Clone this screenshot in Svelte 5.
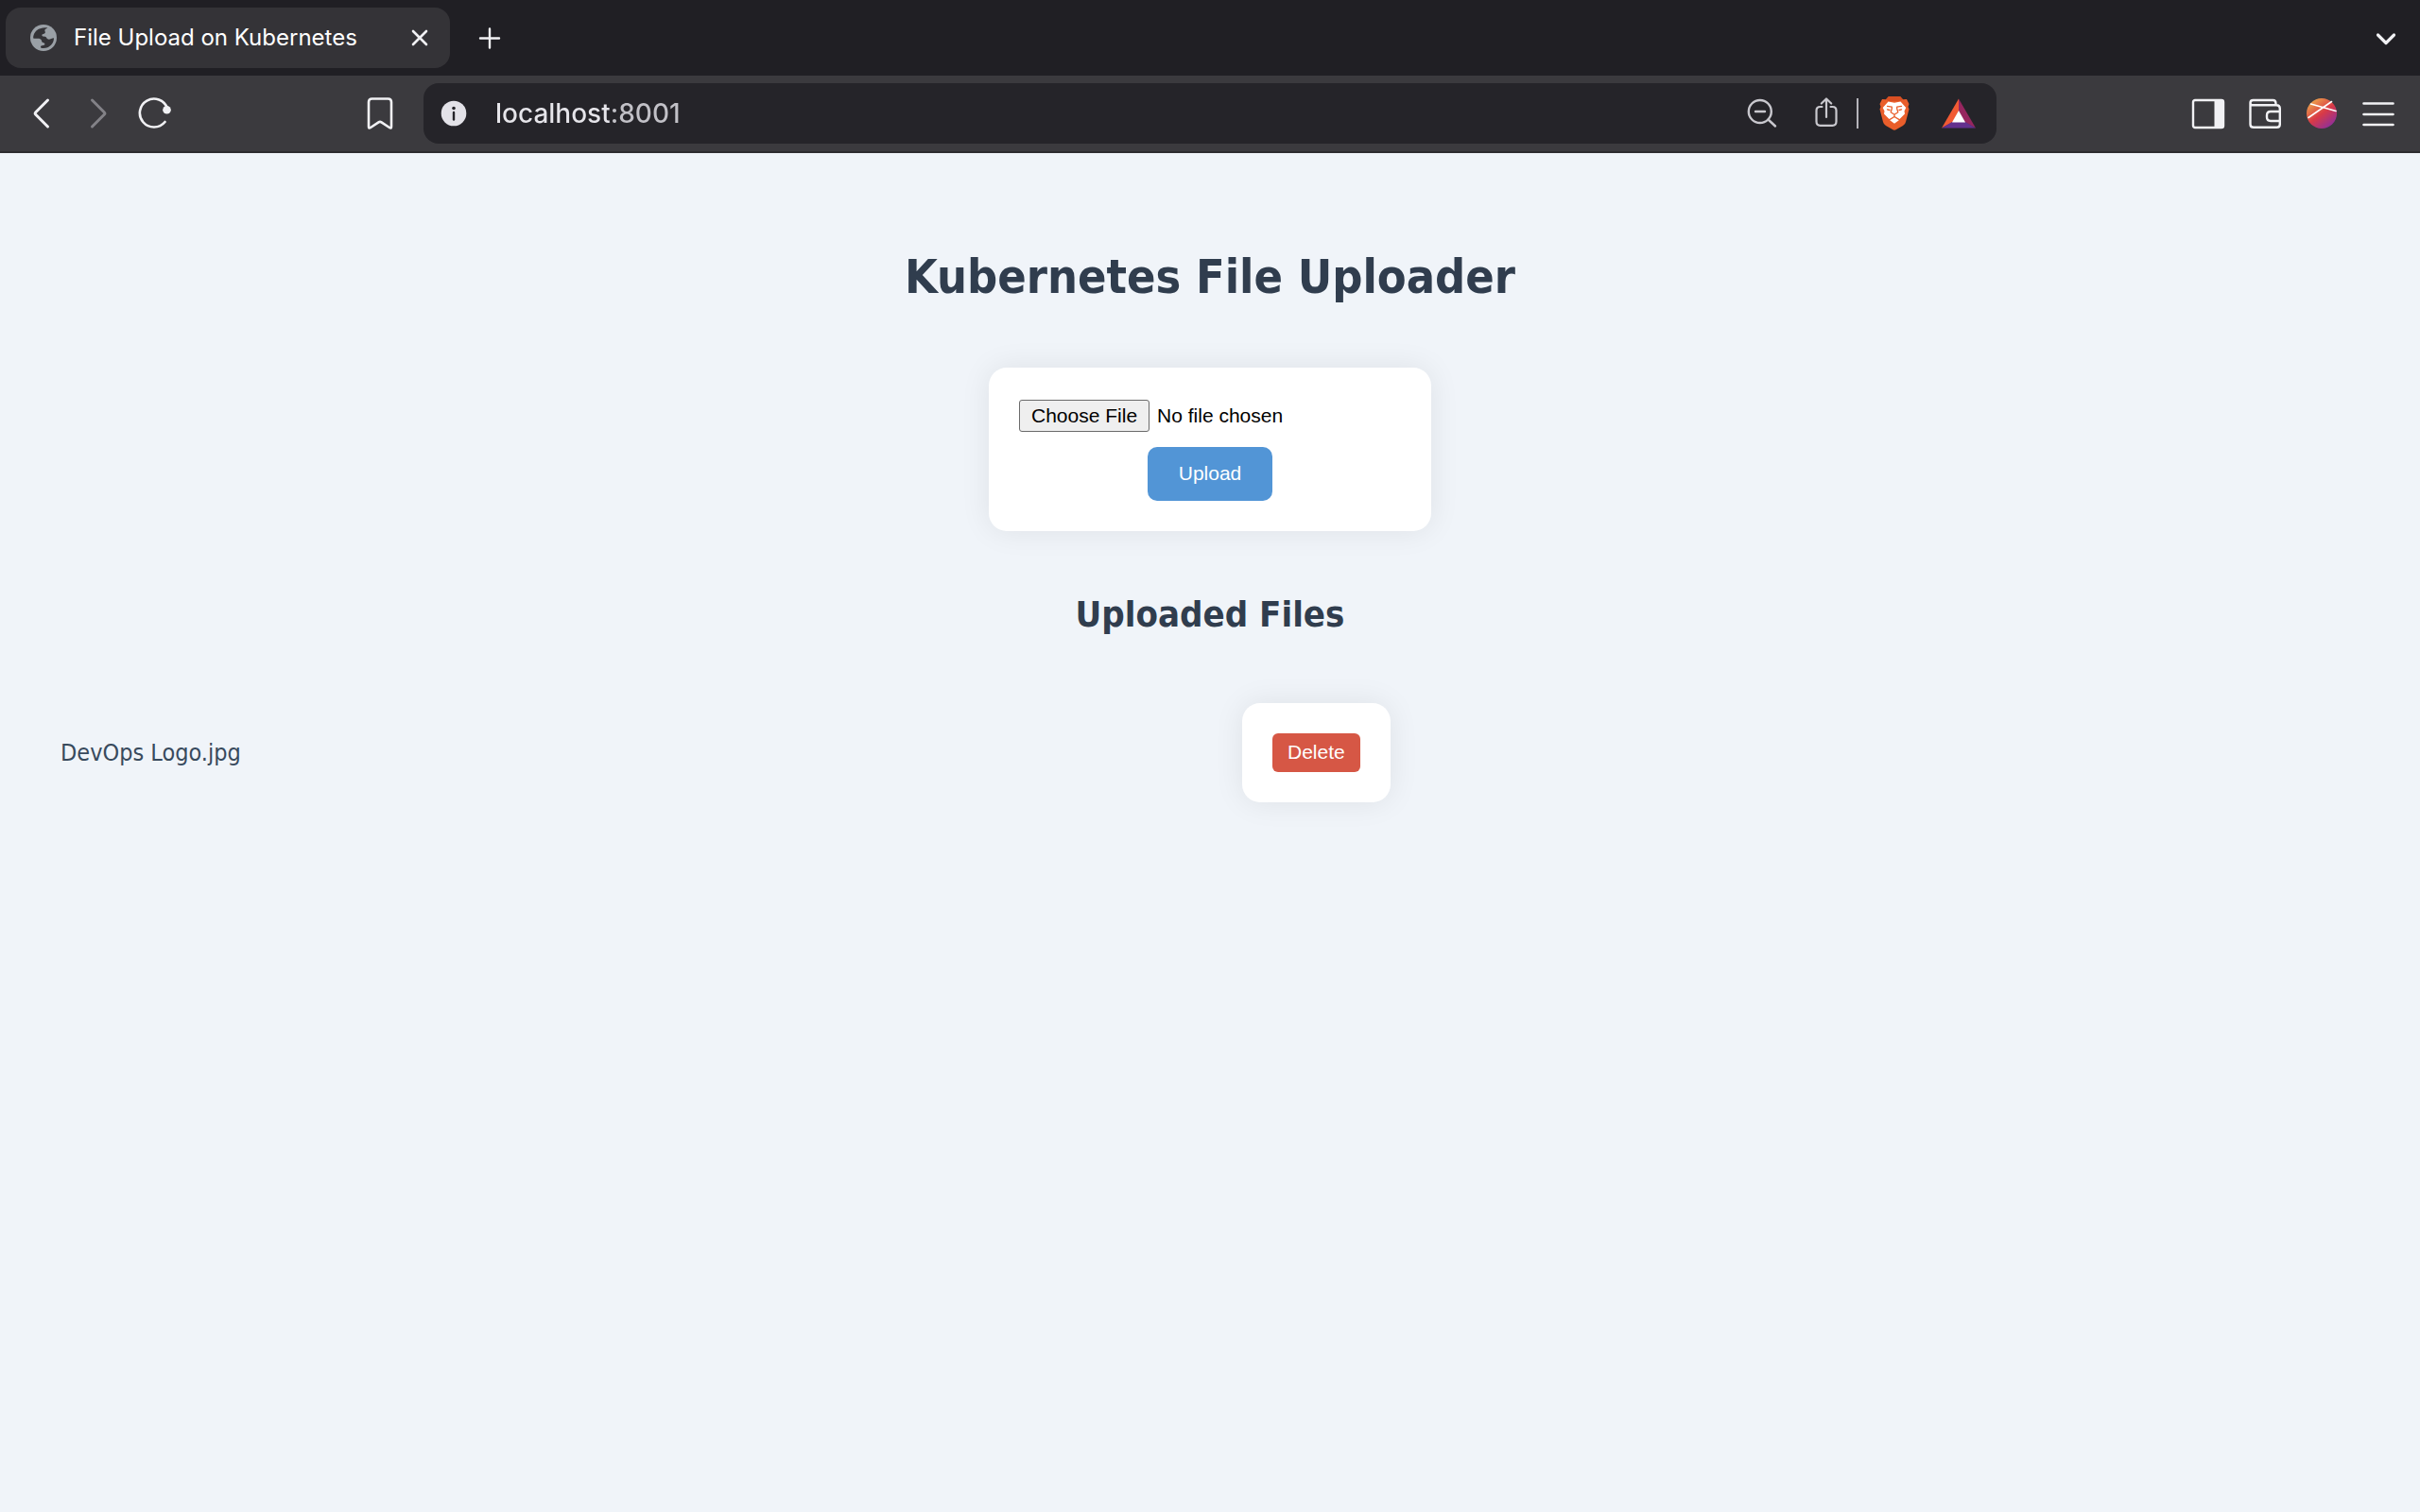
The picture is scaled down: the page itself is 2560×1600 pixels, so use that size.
<script>
  let files = $state(['DevOps Logo.jpg']);

  function removeFile(name) {
    files = files.filter((file) => file !== name);
  }
</script>

<div class="browser">
  <header>
    <div class="tabstrip">
      <div class="tab">
        <svg class="icon favicon" viewBox="0 0 28 28" aria-hidden="true">
          <circle cx="14" cy="14" r="14" fill="#9aa0a6" />
          <path
            d="M3.2 14.6C3 10 6 5.500 10.500 4.300C13 3.400 16 3 18.300 3.500C17.300 4.300 15.800 4.600 15.400 5.800C15.100 6.900 16.200 7.600 15.800 8.700C15.400 9.700 13.900 9.600 13 10.200C12 10.900 12.300 12.100 13.300 12.400L15.800 12.800C17.500 13.200 17.200 15.300 19 15.600C21 15.900 22.800 14.200 25 14.200C25 18.600 22.300 22.500 18.300 24.200C16.300 25 13.800 25.200 11.800 24.800C10.800 24.600 10.700 23 11.600 22.500C12.700 22 14.600 22.300 15.300 21.200C16 20 14.400 19.300 13.200 18.900C11.600 18.300 12.400 16.200 11 15.400C8.800 14.300 5.900 15.200 3.200 14.600Z"
            fill="#343337"
          />
        </svg>
        <span class="tab-title">File Upload on Kubernetes</span>
        <button class="icon close" aria-label="Close tab">
          <svg viewBox="0 0 20 20"><path d="M3 3L17 17M17 3L3 17" stroke-width="2.6" /></svg>
        </button>
      </div>
      <button class="icon" aria-label="New tab">
        <svg viewBox="0 0 36 36"><path d="M18 8.500V28.500M8 18.500H28" stroke-width="2.400" /></svg>
      </button>
      <button class="icon tab-search" aria-label="Search tabs">
        <svg viewBox="0 0 36 36"><path d="M9.500 15L18 23.500L26.500 15" stroke-width="3.200" /></svg>
      </button>
    </div>

    <div class="toolbar">
      <nav class="nav" aria-label="Navigation">
        <button class="icon" aria-label="Back">
          <svg viewBox="0 0 36 36"><path d="M24.500 4L11.800 16.700Q10.500 18 11.800 19.300L24.500 32" stroke-width="3" /></svg>
        </button>
        <button class="icon dim" aria-label="Forward">
          <svg viewBox="0 0 36 36"><path d="M11.500 4L24.200 16.700Q25.500 18 24.200 19.300L11.500 32" stroke-width="3" /></svg>
        </button>
        <button class="icon" aria-label="Reload">
          <svg viewBox="0 0 36 36">
            <path d="M31 12.500A15 15 0 1 0 28.500 27" stroke-width="2.600" />
            <circle cx="30.500" cy="14.300" r="4.300" fill="#f1f1f4" stroke="none" />
          </svg>
        </button>
        <button class="icon bookmark" aria-label="Bookmark this page">
          <svg viewBox="0 0 36 36">
            <path d="M9.500 2.500H26.500Q30 2.500 30 6V32Q30 34.500 28 33L19.500 27.400Q18 26.400 16.500 27.400L8 33Q6 34.500 6 32V6Q6 2.500 9.500 2.500Z" stroke-width="2.600" />
          </svg>
        </button>
      </nav>

      <div class="address">
        <button class="icon" aria-label="Site information">
          <svg viewBox="0 0 36 36">
            <circle cx="18" cy="18" r="13.300" fill="#e3e2e8" stroke="none" />
            <circle cx="18" cy="12.500" r="1.800" fill="#252429" stroke="none" />
            <path d="M18 17V24.500" stroke="#252429" stroke-width="2.400" />
          </svg>
        </button>
        <input class="url" type="text" aria-label="Address" value="localhost:8001" spellcheck="false" />
        <button class="icon soft zoom" aria-label="Zoom out">
          <svg viewBox="0 0 36 36">
            <circle cx="15.800" cy="16" r="12" stroke-width="2.400" />
            <path d="M24.500 24.500L32 31.500M11 16H21" stroke-width="2.400" />
          </svg>
        </button>
        <button class="icon soft" aria-label="Share">
          <svg viewBox="0 0 36 36">
            <path d="M13.500 11H11.500Q7.500 11 7.500 15V26.500Q7.500 30.800 11.500 30.800H24.500Q28.500 30.800 28.500 26.500V15Q28.500 11 24.500 11H22.500M18 22V3M12.800 7.500L18 2.500L23.200 7.500" stroke-width="2.200" />
          </svg>
        </button>
        <span class="divider"></span>
        <button class="icon shields" aria-label="Shields">
          <svg viewBox="0 0 36 36">
            <path d="M12 0H24L27 3.200L31 3L33.500 8L32.500 11L33.500 13.500L30 27Q29.500 29.500 27 31L20 35Q18 36.400 16 35L9 31Q6.500 29.500 6 27L2.500 13.500L3.500 11L2.500 8L5 3L9 3.200Z" fill="#e95e2b" stroke="none" />
            <path d="M12 0H24L27 3.200L24 5H12L9 3.200Z" fill="#d94f22" stroke="none" />
            <path d="M11.500 5.500L18 6.800L24.500 5.500L30.300 12L28.500 15.500L29 18.500L23.500 24L18 20.800L12.500 24L7 18.500L7.500 15.500L5.700 12Z" fill="#fff" stroke="none" />
            <path d="M13.200 25.300L18 22.300L22.800 25.300L18 28.800Z" fill="#fff" stroke="none" />
            <path d="M10.500 10.300L15.300 11.200V13L14.200 16.800L18 19.300L21.800 16.800L20.700 13V11.200L25.500 10.300M10.500 13.800L13 14.500M25.500 13.800L23 14.500M18 19.300V21" stroke="#e95e2b" stroke-width="1.300" />
          </svg>
        </button>
        <button class="icon rewards" aria-label="Rewards">
          <svg viewBox="0 0 36 36">
            <path d="M18 2.500L0 33.500L12 27L18 15.500Z" fill="#f15a34" stroke="none" />
            <path d="M18 2.500L36 33.500L24 27L18 15.500Z" fill="#96265f" stroke="none" />
            <path d="M0 33.500H36L25 27H11Z" fill="#63308d" stroke="none" />
            <path d="M18 15L25 27.400H11Z" fill="#fff" stroke="none" />
          </svg>
        </button>
      </div>

      <div class="actions">
        <button class="icon" aria-label="Show sidebar">
          <svg viewBox="0 0 36 36">
            <rect x="2" y="4" width="32" height="29" rx="2" stroke-width="2.400" />
            <rect x="24.500" y="4" width="10" height="29" rx="1.500" fill="#f1f1f4" stroke="none" />
          </svg>
        </button>
        <button class="icon" aria-label="Wallet">
          <svg viewBox="0 0 36 36">
            <path d="M2.500 6.800Q2.500 4 5.500 4H26.500Q29.500 4 29.500 7.500V9M2.500 6.800V29.500Q2.500 32.800 6 32.800H30.500Q33.800 32.800 33.800 29.500V13Q33.800 9.300 30 9.300H5.500Q2.500 9.300 2.500 6.800ZM33.500 16H24Q20 16 20 20V22Q20 26 24 26H33.500" stroke-width="2.400" />
          </svg>
        </button>
        <button class="icon" aria-label="Profile">
          <svg viewBox="0 0 36 36">
            <defs>
              <linearGradient id="ball" x1="0.15" y1="0.1" x2="0.8" y2="0.95">
                <stop offset="0" stop-color="#eda24b" />
                <stop offset="0.5" stop-color="#d93a46" />
                <stop offset="1" stop-color="#8e2f9c" />
              </linearGradient>
            </defs>
            <circle cx="18" cy="18" r="16" fill="url(#ball)" stroke="none" />
            <path d="M4 22.500L28.500 5.500M6.500 8L33 15.500" stroke="#fff" stroke-width="1.600" />
          </svg>
        </button>
        <button class="icon" aria-label="Menu">
          <svg viewBox="0 0 36 36"><path d="M2.500 7.500H33.500M2.500 19H33.500M2.500 30H33.500" stroke-width="2.600" /></svg>
        </button>
      </div>
    </div>
  </header>

  <main>
    <h1>Kubernetes File Uploader</h1>

    <form class="card upload" onsubmit={(event) => event.preventDefault()}>
      <input type="file" aria-label="File to upload" />
      <button class="primary" type="submit">Upload</button>
    </form>

    <h2>Uploaded Files</h2>

    <ul>
      {#each files as file (file)}
        <li>
          <span>{file}</span>
          <form
            class="card"
            onsubmit={(event) => {
              event.preventDefault();
              removeFile(file);
            }}
          >
            <button class="danger" type="submit">Delete</button>
          </form>
        </li>
      {/each}
    </ul>
  </main>
</div>

<style>
  :global(body) {
    margin: 0;
    background: #f0f4f9;
  }

  .browser {
    min-height: 100vh;
    font-family: 'DejaVu Sans Condensed', 'DejaVu Sans', sans-serif;
  }

  button,
  input {
    margin: 0;
    border: 0;
    font-family: 'Liberation Sans', Arial, sans-serif;
    font-size: 21px;
  }

  header {
    font-family: Inter, sans-serif;
  }

  .icon {
    flex: none;
    width: 36px;
    height: 36px;
    padding: 0;
    background: none;
    color: #f1f1f4;
  }

  .icon svg {
    display: block;
    width: 100%;
    height: 100%;
    fill: none;
    stroke: currentColor;
    stroke-linecap: round;
    stroke-linejoin: round;
  }

  .dim {
    color: #838287;
  }

  .soft {
    color: #c9c8ce;
  }

  .tabstrip {
    display: flex;
    align-items: center;
    gap: 24px;
    padding: 8px 18px 8px 6px;
    background: #201f24;
  }

  .tab {
    display: flex;
    align-items: center;
    box-sizing: border-box;
    width: 470px;
    height: 64px;
    padding: 0 22px 0 26px;
    border-radius: 16px;
    background: #343337;
  }

  .favicon {
    width: 28px;
    height: 28px;
  }

  .tab-title {
    flex: 1;
    margin-left: 18px;
    color: #fff;
    font-size: 24px;
    line-height: 28px;
    white-space: nowrap;
  }

  .close {
    width: 20px;
    height: 20px;
  }

  .tab-search {
    margin-left: auto;
  }

  .toolbar {
    display: grid;
    grid-template-columns: 448px 1fr 448px;
    align-items: center;
    padding: 8px 0;
    border-bottom: 2px solid #2d2c30;
    background: #3b3a3e;
  }

  .nav,
  .actions {
    display: flex;
    gap: 24px;
  }

  .nav {
    padding: 0 28px 0 26px;
  }

  .bookmark {
    margin-left: auto;
  }

  .actions {
    justify-content: flex-end;
    padding-right: 26px;
  }

  .address {
    display: flex;
    align-items: center;
    height: 64px;
    padding: 0 22px 0 14px;
    border-radius: 16px;
    background: #252429;
  }

  .url {
    flex: 1;
    min-width: 0;
    margin-left: 26px;
    padding: 0;
    background: linear-gradient(90deg, #e6e5ea 120px, #c2c1c7 120px);
    background-clip: text;
    color: transparent;
    font-family: Inter, sans-serif;
    font-size: 28px;
    font-weight: 500;
    line-height: 36px;
  }

  .zoom {
    margin-right: 32px;
  }

  .divider {
    width: 2px;
    height: 32px;
    margin: 0 20px 0 14px;
    background: #b5b4ba;
  }

  .rewards {
    margin-left: 32px;
  }

  main {
    display: flex;
    flex-direction: column;
    align-items: center;
    padding: 100px 64px 64px;
    color: #303d4e;
  }

  h1,
  h2 {
    margin: 0;
    font-weight: 700;
  }

  h1 {
    margin-bottom: 65px;
    font-size: 50px;
    line-height: 62px;
  }

  h2 {
    margin: 65px 0 71px;
    font-size: 38px;
    line-height: 46px;
  }

  .card {
    padding: 32px;
    border-radius: 19px;
    background: #fff;
    box-shadow: 0 0 32px rgba(0, 0, 0, 0.08);
  }

  .upload {
    display: flex;
    flex-direction: column;
    align-items: center;
    gap: 16px;
  }

  input[type='file'] {
    width: 404px;
    height: 36px;
    padding-top: 2px;
    box-sizing: border-box;
    color: #000;
  }

  input[type='file']::file-selector-button {
    height: 34px;
    margin: 0 8px 0 0;
    padding: 0 12px;
    border: 1px solid #6b6b6b;
    border-radius: 3px;
    background: #efefef;
    color: #000;
    font: inherit;
  }

  .primary,
  .danger {
    display: block;
    color: #fff;
    line-height: 25px;
  }

  .primary {
    padding: 15px 33px 17px;
    border-radius: 10px;
    background: #5295d6;
  }

  .danger {
    padding: 7px 16px 9px;
    border-radius: 6px;
    background: #d65745;
  }

  ul {
    width: 100%;
    margin: 0;
    padding: 0;
    list-style: none;
  }

  li {
    display: grid;
    grid-template-columns: 1fr 1fr;
    align-items: center;
    column-gap: 68px;
    color: #384a5d;
    font-size: 25px;
    line-height: 32px;
  }

  li .card {
    justify-self: start;
  }
</style>
